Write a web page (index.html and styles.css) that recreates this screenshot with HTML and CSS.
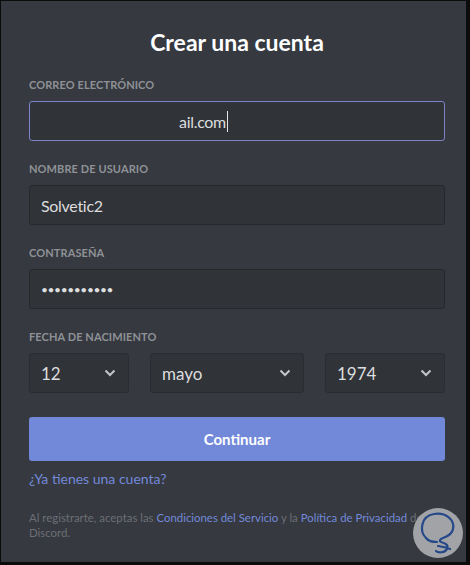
FILE: index.html
```html
<!DOCTYPE html>
<html lang="es">
<head>
<meta charset="utf-8">
<title>Crear una cuenta</title>
<link rel="stylesheet" href="styles.css">
</head>
<body>
<main class="panel">
  <h1 class="title">Crear una cuenta</h1>

  <div class="field">
    <div class="label">Correo electrónico</div>
    <div class="input input-focused"><span class="email-text">ail.com</span><span class="caret"></span></div>
  </div>

  <div class="field">
    <div class="label">Nombre de usuario</div>
    <div class="input">Solvetic2</div>
  </div>

  <div class="field">
    <div class="label">Contraseña</div>
    <div class="input password">•••••••••••</div>
  </div>

  <div class="field field-date">
    <div class="label">Fecha de nacimiento</div>
    <div class="date-row">
      <div class="select"><span>12</span><svg class="chev" viewBox="0 0 12 8" width="12" height="8"><path d="M1.5 1.5 L6 6 L10.5 1.5" fill="none" stroke="#c4c6c9" stroke-width="2"/></svg></div>
      <div class="select"><span>mayo</span><svg class="chev" viewBox="0 0 12 8" width="12" height="8"><path d="M1.5 1.5 L6 6 L10.5 1.5" fill="none" stroke="#c4c6c9" stroke-width="2"/></svg></div>
      <div class="select"><span>1974</span><svg class="chev" viewBox="0 0 12 8" width="12" height="8"><path d="M1.5 1.5 L6 6 L10.5 1.5" fill="none" stroke="#c4c6c9" stroke-width="2"/></svg></div>
    </div>
  </div>

  <button class="btn">Continuar</button>

  <a class="login-link" href="#">¿Ya tienes una cuenta?</a>

  <p class="terms"><span>Al registrarte, aceptas las</span> <a href="#">Condiciones del Servicio</a> <span>y la</span> <a href="#">Política de Privacidad</a> <span>de</span> <span>Discord.</span></p>

  <div class="watermark">
    <svg viewBox="0 0 52 52" width="52" height="52">
      <circle cx="26" cy="26" r="25" fill="#a2a3a7"/>
      <path d="M14 31 C7 24 9 9 22 7 C34 5 43 13 41 22 C40 28 34 30 31 31 C28 32 27 34 29 35 C33 36 37 38 35 42 C33 46 26 46 24 44 M14 31 C17 35 21 35 25 35 M26 39 C30 40 34 40 38 42" fill="none" stroke="#254889" stroke-width="2.2" stroke-linecap="round" stroke-linejoin="round"/>
    </svg>
  </div>
</main>
</body>
</html>
```

FILE: styles.css
```css
* { box-sizing: border-box; }

html, body {
  margin: 0;
  height: 565px;
  background: #0c0c0d;
  overflow: hidden;
}

body {
  padding: 1px 4px 3px 1px;
  font-family: Lato, "Open Sans", sans-serif;
}

.panel {
  position: relative;
  height: 561px;
  background: #36393f;
  padding: 26px 21px 0 28px;
  display: flex;
  flex-direction: column;
}

.title {
  margin: 0 0 20px;
  font-size: 23px;
  line-height: 30px;
  font-weight: 700;
  color: #ffffff;
  text-align: center;
}

.field {
  display: flex;
  flex-direction: column;
  gap: 8px;
  margin-bottom: 20px;
}

.field-date { margin-bottom: 24px; }

.label {
  font-size: 11px;
  line-height: 16px;
  font-weight: 700;
  text-transform: uppercase;
  color: #8e9297;
  letter-spacing: 0.1px;
}

.input {
  height: 40px;
  border: 1px solid #26282c;
  border-radius: 3px;
  background: #303338;
  color: #dcddde;
  font-size: 16px;
  letter-spacing: -0.3px;
  padding: 0 11px;
  display: flex;
  align-items: center;
}

.input-focused {
  border-color: #7a84c6;
}

.email-text {
  margin-left: 138px;
}

.caret {
  width: 1px;
  height: 21px;
  background: #e6e6e6;
  margin-left: 1px;
}

.password {
  font-size: 12px;
  letter-spacing: -0.4px;
}

.date-row {
  display: grid;
  grid-template-columns: 100px 154px 120px;
  column-gap: 21px;
}

.select {
  height: 40px;
  border: 1px solid #2a2c31;
  border-radius: 3px;
  background: #303338;
  color: #dcddde;
  font-size: 17px;
  padding: 0 12px 0 11px;
  display: flex;
  align-items: center;
  justify-content: space-between;
}

.chev { display: block; }

.btn {
  height: 44px;
  width: 100%;
  border: none;
  border-radius: 3px;
  background: #7289da;
  color: #ffffff;
  font-family: inherit;
  font-size: 15px;
  font-weight: 700;
  margin: 0;
  padding: 0;
}

.login-link {
  margin-top: 8px;
  font-size: 14px;
  line-height: 20px;
  color: #7289da;
  text-decoration: none;
  align-self: flex-start;
}

.terms {
  margin: 21px 0 0;
  font-size: 11.4px;
  line-height: 15px;
  color: #6b6f76;
}

.terms a {
  color: #7289da;
  text-decoration: none;
}

.watermark {
  position: absolute;
  left: 411px;
  top: 506px;
  width: 52px;
  height: 52px;
}

.watermark svg { display: block; }
```
